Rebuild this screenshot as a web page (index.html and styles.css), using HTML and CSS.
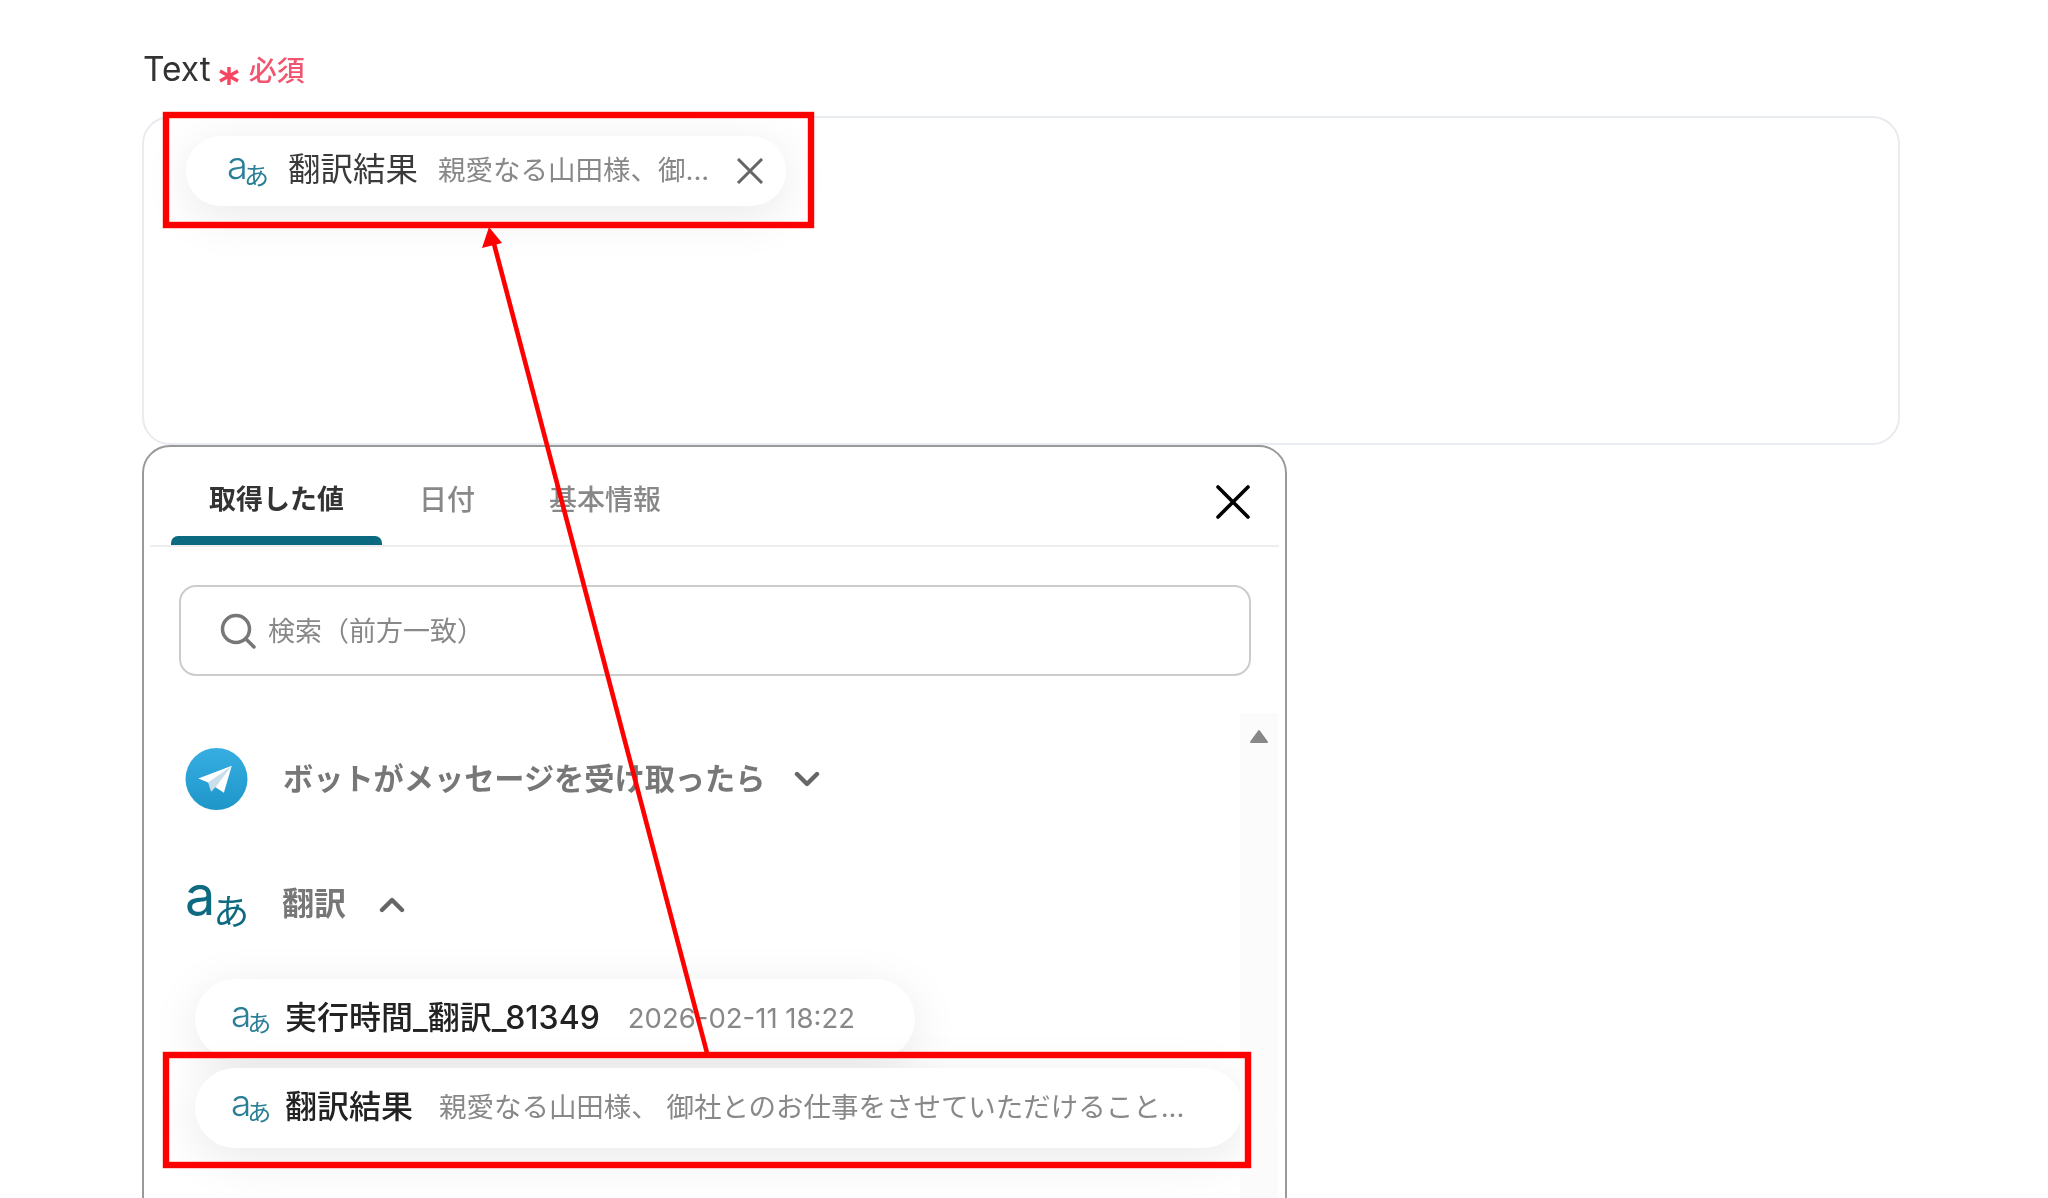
FILE: index.html
```html
<!DOCTYPE html>
<html lang="ja">
<head>
<meta charset="utf-8">
<title>Text</title>
<link rel="stylesheet" href="styles.css">
</head>
<body>
<main class="page">
  <div class="label-row">
    <span class="label-text">Text</span>
    <svg class="label-star" viewBox="0 0 22 20"><path d="M11 1V19M2 5 20 15M20 5 2 15"/></svg>
    <span class="label-req">必須</span>
  </div>
  <section class="field">
    <div class="pill pill-top">
      <span class="tr tr-s"><span class="tr-a">a</span><span class="tr-k">あ</span></span>
      <span class="pill-name-top">翻訳結果</span>
      <span class="pill-value">親愛なる山田様、御...</span>
      <svg class="pill-x" viewBox="0 0 28 26"><path d="M2 1 26 25M26 1 2 25"/></svg>
    </div>
  </section>
  <section class="pop">
    <header class="pop-head">
      <nav class="tabs">
        <div class="tab tab-on"><span class="tab-text">取得した値</span><i class="tab-bar"></i></div>
        <div class="tab"><span class="tab-text">日付</span><i class="tab-bar tab-bar-off"></i></div>
        <div class="tab"><span class="tab-text">基本情報</span><i class="tab-bar tab-bar-off"></i></div>
      </nav>
      <svg class="pop-x" viewBox="0 0 34 34"><path d="M2 2 32 32M32 2 2 32"/></svg>
    </header>
    <div class="search">
      <svg class="search-icon" viewBox="0 0 36 36"><circle cx="16" cy="16" r="13.5"/><path d="M26 26 34 34"/></svg>
      <span class="search-text">検索（前方一致）</span>
    </div>
    <div class="body">
      <div class="list">
        <div class="group group-tg">
          <svg class="tg" viewBox="0 0 64 64">
            <defs><linearGradient id="tg-g" x1="0" y1="0" x2="0" y2="1"><stop offset="0" stop-color="#37aee2"/><stop offset="1" stop-color="#1e96c8"/></linearGradient></defs>
            <circle cx="32" cy="32" r="31.5" fill="url(#tg-g)"/>
            <path fill="#fff" d="M13.5 31.5 47.5 18.5 39.5 46 29 39 23.5 35.5Z"/>
            <path fill="#c9dfec" d="M23.5 35.5 26.5 45 31.5 39.5 47.5 18.5Z"/>
          </svg>
          <span class="group-title">ボットがメッセージを受け取ったら</span>
          <svg class="chev" viewBox="0 0 26 16"><path d="M3 3 13 13 23 3"/></svg>
        </div>
        <div class="group group-tr">
          <span class="tr-box"><span class="tr tr-l"><span class="tr-a">a</span><span class="tr-k">あ</span></span></span>
          <span class="group-title group-title-tr">翻訳</span>
          <svg class="chev chev-up" viewBox="0 0 26 16"><path d="M3 13 13 3 23 13"/></svg>
        </div>
        <div class="pill pill-item pill-first">
          <span class="tr tr-m"><span class="tr-a">a</span><span class="tr-k">あ</span></span>
          <span class="pill-name">実行時間_翻訳_81349</span>
          <span class="pill-value pill-date">2026-02-11 18:22</span>
        </div>
        <div class="pill pill-item pill-second">
          <span class="tr tr-m"><span class="tr-a">a</span><span class="tr-k">あ</span></span>
          <span class="pill-name">翻訳結果</span>
          <span class="pill-value pill-long">親愛なる山田様、 御社とのお仕事をさせていただけること...</span>
        </div>
      </div>
      <div class="scroll"><svg class="scroll-up" viewBox="0 0 20 15"><path d="M10 2 18 13H2Z"/></svg></div>
    </div>
  </section>
</main>
<svg class="marks" viewBox="0 0 2048 1198">
  <rect class="mark-box" x="166" y="115" width="645" height="110"/>
  <rect class="mark-box" x="166" y="1055" width="1082" height="110"/>
  <path class="mark-line" d="M707 1053 493 240"/>
  <path class="mark-head" d="M489 227 482 248 502 243Z"/>
</svg>
</body>
</html>
```
FILE: styles.css
```css
* { box-sizing: border-box; }
html, body { margin: 0; height: 100%; background: #fff; }
body {
  position: relative;
  overflow: hidden;
  font-family: Inter, "Noto Sans CJK JP", sans-serif;
  color: #333;
}
.page { height: 1198px; overflow: hidden; padding: 52px 0 0 142px; filter: blur(.5px); }

.label-row { display: flex; align-items: center; height: 36px; margin-bottom: 28px; }
.label-text { font-size: 33.5px; color: #333; line-height: 36px; margin: -3px 0 0 1px; }
.label-star { width: 22px; height: 20px; margin: 12px 9px 0 7px; }
.label-star path { fill: none; stroke: #f5465f; stroke-width: 3.4; }
.label-req { font-size: 28px; font-weight: 500; line-height: 36px; color: #f0566f; margin-top: 2px; }

.field {
  width: 1758px;
  height: 329px;
  border: 2px solid #e8ebef;
  border-radius: 28px;
  padding: 18px 0 0 42px;
}

.pill {
  display: flex;
  align-items: center;
  background: #fff;
  border-radius: 40px;
  box-shadow: 0 10px 50px rgba(0, 0, 0, .09);
  width: fit-content;
  white-space: nowrap;
}
.pill-top { height: 70px; padding: 0 22px 0 41px; }
.pill-name-top { font-size: 32.5px; color: #3a3a3a; margin-left: 20px; line-height: 40px; margin-top: -3px; }
.pill-value { font-size: 27.5px; color: #888; line-height: 36px; margin: -2px 0 0 20px; white-space: pre; flex: none; }
.pill-x { width: 28px; height: 26px; margin-left: 27px; }
.pill-x path { fill: none; stroke: #666; stroke-width: 3; }

.tr { display: inline-flex; color: #2a7f96; font-weight: 300; line-height: 1; flex: none; }
.tr-a { align-self: flex-start; }
.tr-k { align-self: flex-end; font-weight: 400; }
.tr-s { width: 41px; height: 32px; font-size: 38px; }
.tr-s .tr-a { margin-top: -9px; }
.tr-s .tr-k { font-size: 25px; margin-left: -4px; margin-bottom: -2px; }
.tr-m { width: 39px; height: 30px; font-size: 37px; }
.tr-m .tr-a { margin-top: -9px; }
.tr-m .tr-k { font-size: 24px; margin-left: -4px; margin-bottom: -2px; }
.tr-l { width: 60px; height: 46px; font-size: 54px; color: #0e6a80; }
.tr-l .tr-a { margin-top: -13px; font-weight: 400; }
.tr-l .tr-k { font-size: 36px; margin-left: -2px; margin-bottom: -2px; }

.pop {
  width: 1145px;
  height: 800px;
  border: 2px solid #999;
  border-radius: 28px;
  background: #fff;
}
.pop-head {
  display: flex;
  justify-content: space-between;
  align-items: center;
  height: 100px;
  margin: 0 6px;
  padding: 0 29px 0 21px;
  border-bottom: 2px solid #eee;
}
.tabs { display: flex; height: 98px; }
.tab { display: flex; flex-direction: column; }
.tab-text {
  flex: 1;
  display: flex;
  align-items: center;
  padding: 12px 37px 0;
  font-size: 28px;
  font-weight: 500;
  color: #888;
}
.tab-on .tab-text { font-size: 27px; font-weight: 700; color: #333; padding: 12px 38px 0; }
.tab-bar { display: block; height: 9px; background: #0b6a80; border-radius: 7px 7px 0 0; }
.tab-bar-off { background: transparent; }
.pop-x { width: 34px; height: 34px; margin-top: 12px; }
.pop-x path { fill: none; stroke: #000; stroke-width: 3.6; stroke-linecap: round; }

.search {
  display: flex;
  align-items: center;
  gap: 12px;
  height: 91px;
  margin: 38px 34px 0 35px;
  padding-left: 39px;
  border: 2px solid #ccc;
  border-radius: 17px;
}
.search-icon { width: 36px; height: 36px; }
.search-icon circle, .search-icon path { fill: none; stroke: #777; stroke-width: 3.5; stroke-linecap: round; }
.search-text { font-size: 27px; color: #888; margin-top: -2px; }

.body { display: flex; margin: 37px 7px 0 0; height: 560px; }
.list { flex: 1; min-width: 0; }
.scroll { width: 38px; background: #fbfbfb; padding: 16px 9px 0; }
.scroll-up { display: block; width: 20px; height: 15px; }
.scroll-up path { fill: #888; stroke: #888; stroke-width: 2; stroke-linejoin: round; }

.group { display: flex; align-items: center; height: 64px; padding-left: 41px; }
.group-tg { margin-top: 34px; }
.group-tr { margin-top: 62px; }
.tg { width: 63px; height: 64px; flex: none; }
.tr-box { width: 63px; flex: none; display: flex; }
.group-title { font-size: 30.2px; font-weight: 600; color: #777; margin: 0 0 5px 35px; }
.group-title-tr { font-size: 32px; margin: 0 0 8px 34px; }
.chev { width: 26px; height: 16px; margin-left: 29px; }
.chev-up { margin-left: 33px; }
.chev path { fill: none; stroke: #666; stroke-width: 4.4; stroke-linecap: round; stroke-linejoin: round; }

.pill-item { height: 80px; margin-left: 51px; padding: 0 59px 0 36px; }
.pill-first { margin-top: 42px; padding-right: 60px; }
.pill-second { margin-top: 9px; }
.pill-name { font-size: 32px; font-weight: 500; color: #222; margin: -2px 0 0 15px; line-height: 40px; flex: none; }
.pill-date { margin-left: 28px; }
.pill-long { margin-left: 26px; letter-spacing: -.03px; }

.marks { position: absolute; left: 0; top: 0; width: 2048px; height: 1198px; pointer-events: none; }
.mark-box { fill: none; stroke: #f00; stroke-width: 6.4; }
.mark-line { fill: none; stroke: #f00; stroke-width: 4.6; }
.mark-head { fill: #f00; }
```
